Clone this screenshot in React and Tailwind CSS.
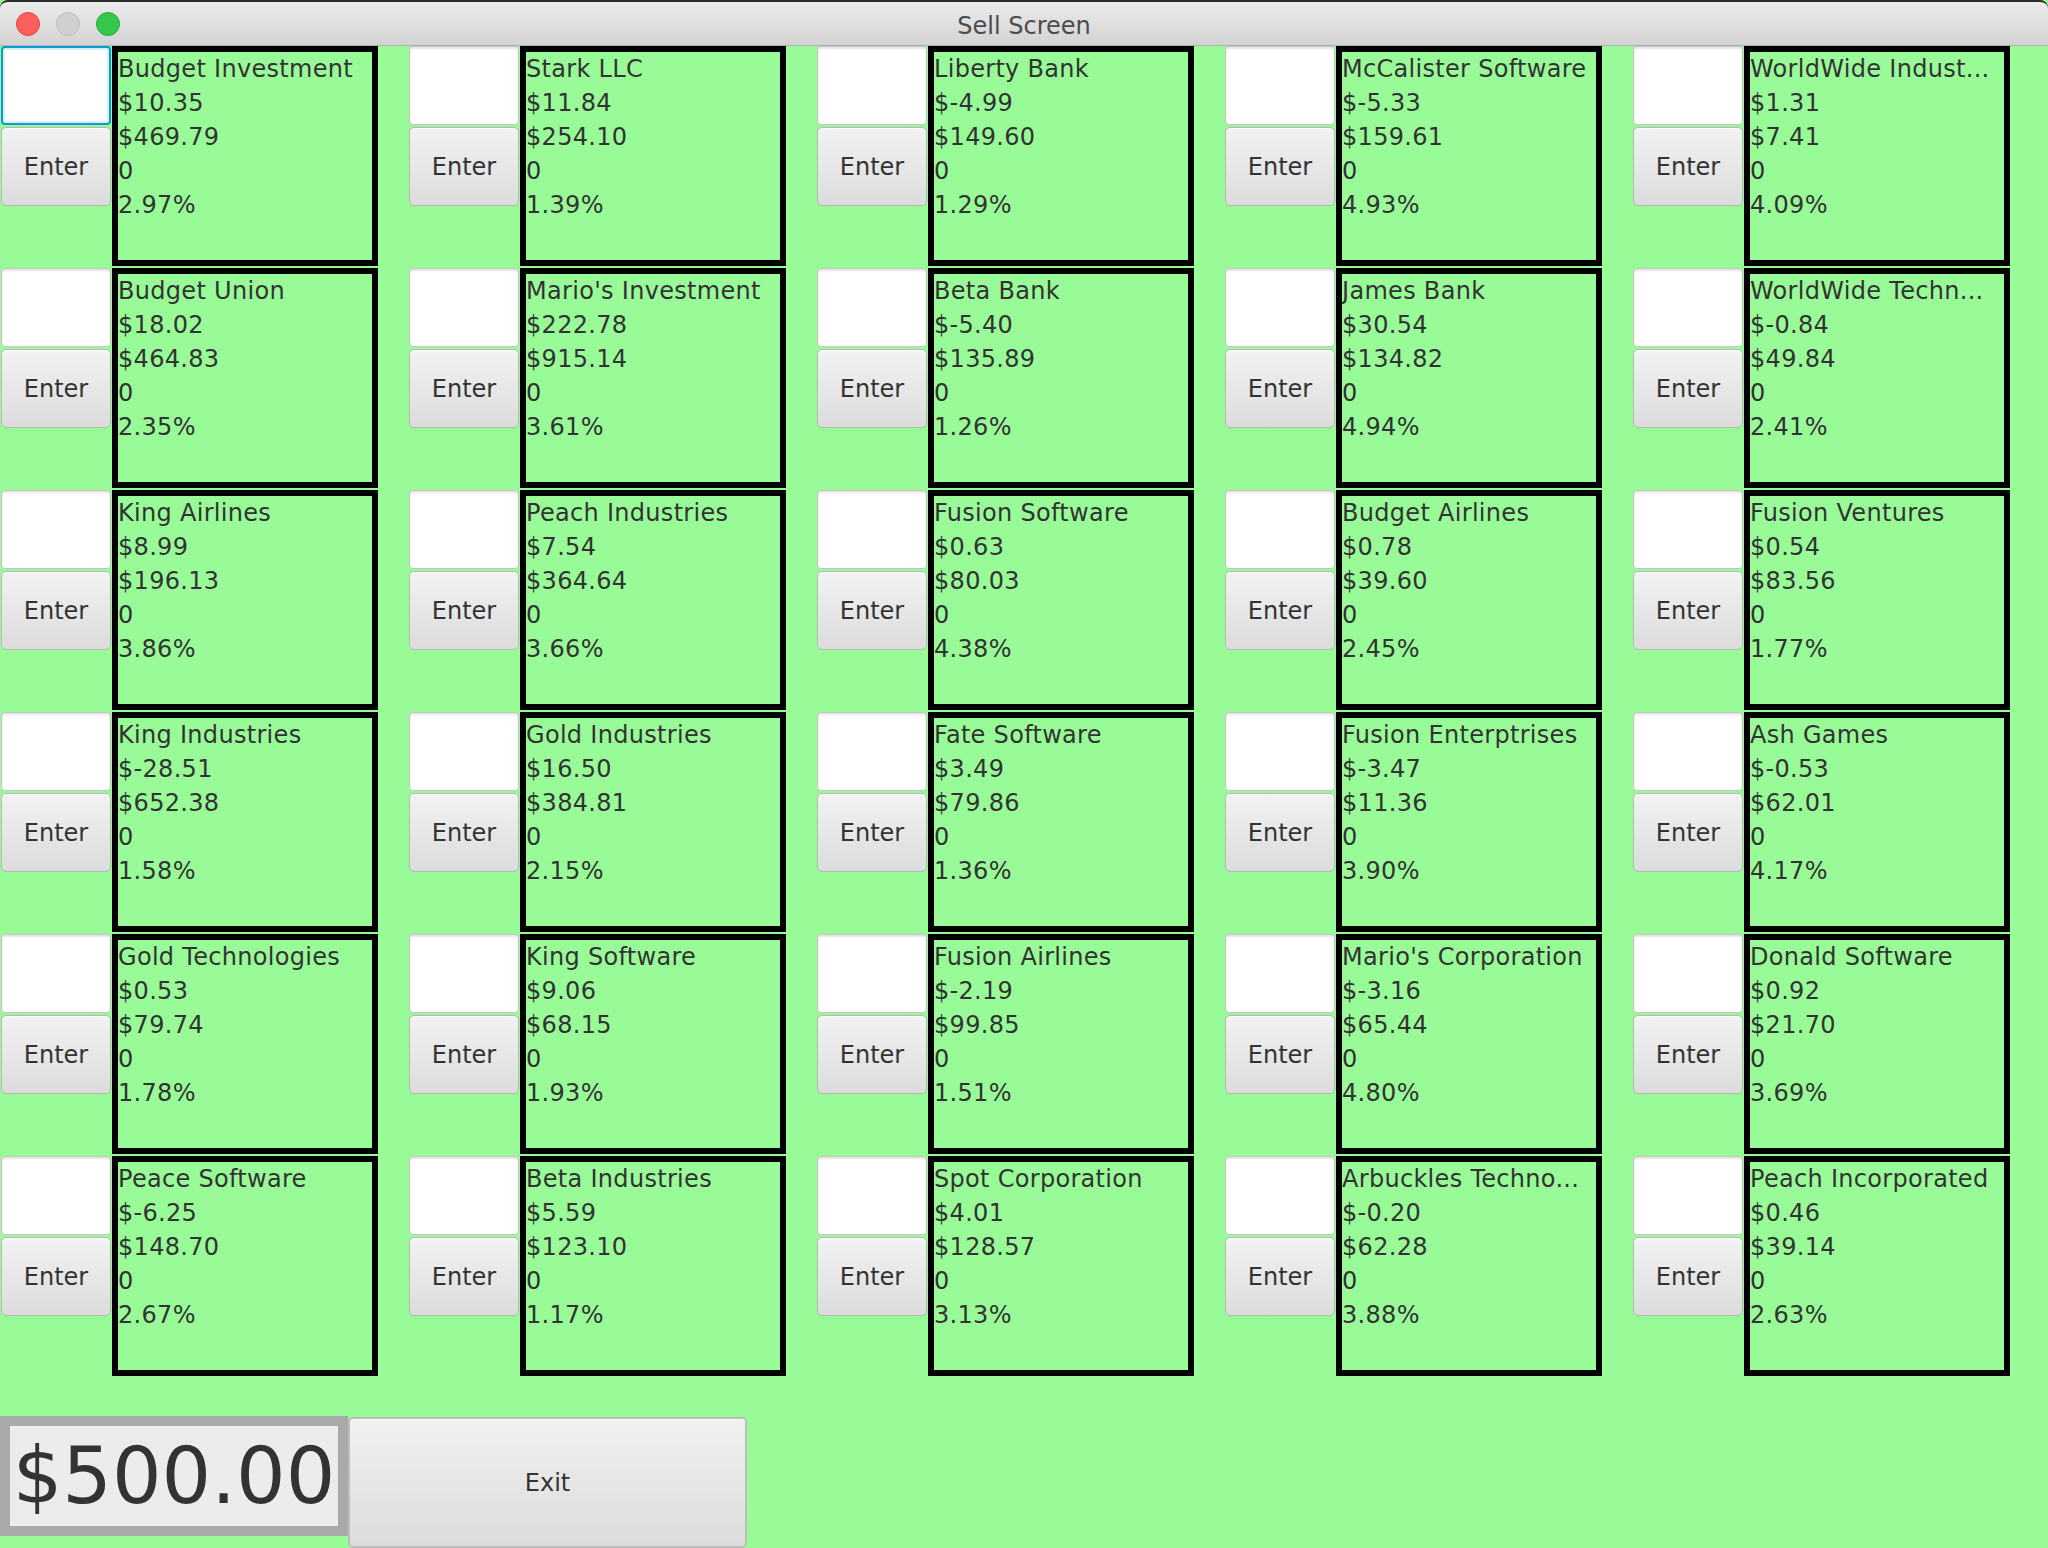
import React from 'react';

const stocks = [
  ['Budget Investment', '$10.35', '$469.79', '0', '2.97%'],
  ['Stark LLC', '$11.84', '$254.10', '0', '1.39%'],
  ['Liberty Bank', '$-4.99', '$149.60', '0', '1.29%'],
  ['McCalister Software', '$-5.33', '$159.61', '0', '4.93%'],
  ['WorldWide Indust...', '$1.31', '$7.41', '0', '4.09%'],
  ['Budget Union', '$18.02', '$464.83', '0', '2.35%'],
  ["Mario's Investment", '$222.78', '$915.14', '0', '3.61%'],
  ['Beta Bank', '$-5.40', '$135.89', '0', '1.26%'],
  ['James Bank', '$30.54', '$134.82', '0', '4.94%'],
  ['WorldWide Techn...', '$-0.84', '$49.84', '0', '2.41%'],
  ['King Airlines', '$8.99', '$196.13', '0', '3.86%'],
  ['Peach Industries', '$7.54', '$364.64', '0', '3.66%'],
  ['Fusion Software', '$0.63', '$80.03', '0', '4.38%'],
  ['Budget Airlines', '$0.78', '$39.60', '0', '2.45%'],
  ['Fusion Ventures', '$0.54', '$83.56', '0', '1.77%'],
  ['King Industries', '$-28.51', '$652.38', '0', '1.58%'],
  ['Gold Industries', '$16.50', '$384.81', '0', '2.15%'],
  ['Fate Software', '$3.49', '$79.86', '0', '1.36%'],
  ['Fusion Enterptrises', '$-3.47', '$11.36', '0', '3.90%'],
  ['Ash Games', '$-0.53', '$62.01', '0', '4.17%'],
  ['Gold Technologies', '$0.53', '$79.74', '0', '1.78%'],
  ['King Software', '$9.06', '$68.15', '0', '1.93%'],
  ['Fusion Airlines', '$-2.19', '$99.85', '0', '1.51%'],
  ["Mario's Corporation", '$-3.16', '$65.44', '0', '4.80%'],
  ['Donald Software', '$0.92', '$21.70', '0', '3.69%'],
  ['Peace Software', '$-6.25', '$148.70', '0', '2.67%'],
  ['Beta Industries', '$5.59', '$123.10', '0', '1.17%'],
  ['Spot Corporation', '$4.01', '$128.57', '0', '3.13%'],
  ['Arbuckles Techno...', '$-0.20', '$62.28', '0', '3.88%'],
  ['Peach Incorporated', '$0.46', '$39.14', '0', '2.63%'],
];

const TitleBar = () => (
  <div className="relative h-[46px] shrink-0 border-t-2 border-[#2a2a2a] border-b border-b-[#b0b0b0] bg-gradient-to-b from-[#ebebeb] to-[#d3d3d3] rounded-t-[8px] flex items-center justify-center pt-[4px]">
    <div className="absolute left-[16px] top-[10px] flex gap-[16px]">
      <span className="w-[24px] h-[24px] rounded-full bg-[#fc605c] border border-[#e0443e]" />
      <span className="w-[24px] h-[24px] rounded-full bg-[#d0d0d0] border border-[#bcbcbc]" />
      <span className="w-[24px] h-[24px] rounded-full bg-[#34c84a] border border-[#25a938]" />
    </div>
    <span className="text-[24px] leading-none text-[#4c4c4c]">Sell Screen</span>
  </div>
);

const StockCell = ({ stock, focused }) => (
  <div className="flex gap-[1px]">
    <div className="w-[110px] flex flex-col gap-[2px]">
      <input
        className={`h-[79px] w-full rounded-[4px] bg-white outline-none ${
          focused
            ? 'border-2 border-[#0d9bd8] shadow-[inset_0_0_0_2px_#d7edf8]'
            : 'border border-[#c4c4c4] shadow-[inset_0_2px_2px_#e6e6e6]'
        }`}
      />
      <button className="h-[79px] w-full rounded-[5px] border border-[#b6b6b6] bg-gradient-to-b from-[#f2f2f2] to-[#dcdcdc] text-[24px] text-[#333] shadow-[inset_0_1px_0_#fff]">
        Enter
      </button>
    </div>
    <div className="w-[266px] h-[220px] border-[6px] border-black text-[24px] leading-[34px] tracking-[0.3px] text-[#333] whitespace-nowrap overflow-hidden">
      {stock.map((line, i) => (
        <div key={i}>{line}</div>
      ))}
    </div>
  </div>
);

export default function App() {
  return (
    <div className="w-[2048px] h-[1548px] bg-[#98fb98] flex flex-col overflow-hidden font-['DejaVu_Sans',sans-serif]">
      <TitleBar />
      <div className="grid grid-cols-[repeat(5,377px)] gap-x-[31px] gap-y-[2px] pl-[1px]">
        {stocks.map((s, i) => (
          <StockCell key={i} stock={s} focused={i === 0} />
        ))}
      </div>
      <div className="flex items-start mt-[40px]">
        <div className="w-[348px] h-[120px] border-[10px] border-[#a9a9a9] bg-[#ececec] flex items-center justify-center text-[78px] leading-none text-[#333]">
          $500.00
        </div>
        <button className="mt-[1px] w-[399px] h-[131px] rounded-[5px] border-2 border-[#bdbdbd] bg-gradient-to-b from-[#f1f1f1] to-[#dcdcdc] text-[24px] text-[#333] shadow-[inset_0_1px_0_#fff]">
          Exit
        </button>
      </div>
    </div>
  );
}
